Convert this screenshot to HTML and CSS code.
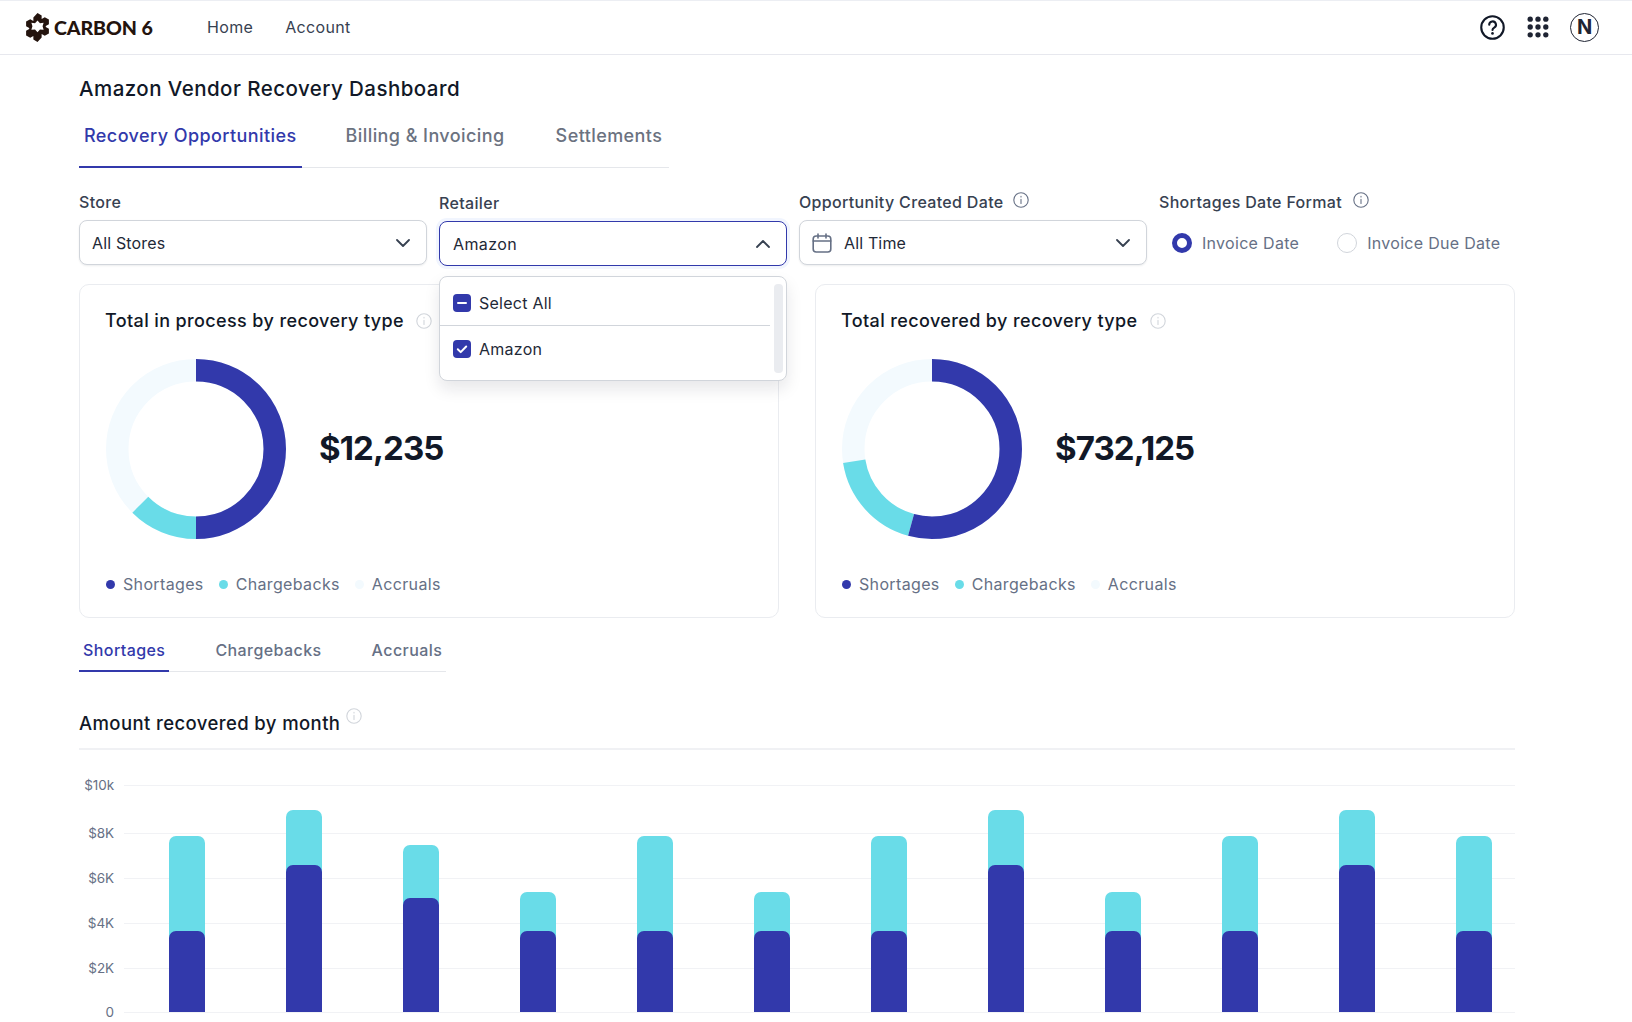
FILE: index.html
```html
<!DOCTYPE html>
<html lang="en">
<head>
<meta charset="utf-8">
<title>Amazon Vendor Recovery Dashboard</title>
<link rel="stylesheet" href="styles.css">
</head>
<body>
<header class="topbar">
  <div class="brand">
    <svg class="brand-mark" viewBox="0 0 28 28" aria-hidden="true">
      <path fill="#24140e" d="M14 0l4 2.3v3.4l3-1.7 4 2.3v4.6l-3 1.7v.8l3 1.7v4.6l-4 2.3-3-1.7v3.4L14 28l-4-2.3v-3.4L7 24l-4-2.3v-4.6l3-1.7v-.8l-3-1.7V8.3L7 6l3 1.7V4.3z"/>
      <path fill="#fff" d="M14 7.2l2.4 2.6 3.5-.3-1 3.4 1 3.3-3.5-.2-2.4 2.6-2.4-2.6-3.5.2 1-3.3-1-3.4 3.5.3z"/>
    </svg>
    <span class="brand-name">CARBON 6</span>
  </div>
  <nav class="mainnav"><a>Home</a><a>Account</a></nav>
  <div class="top-icons">
    <svg class="icon-help" viewBox="0 0 26 26" aria-hidden="true">
      <circle cx="13" cy="13" r="11.7" fill="none" stroke="#111827" stroke-width="2.2"/>
      <path d="M9.6 10.2a3.5 3.5 0 1 1 5.2 3c-1.2.7-1.8 1.3-1.8 2.4" fill="none" stroke="#111827" stroke-width="2.2" stroke-linecap="round"/>
      <circle cx="13" cy="19.2" r="1.4" fill="#111827"/>
    </svg>
    <svg class="icon-apps" viewBox="0 0 24 24" aria-hidden="true">
      <g fill="#1f2433">
        <circle cx="3.5" cy="3.5" r="2.9"/><circle cx="12" cy="3.5" r="2.9"/><circle cx="20.5" cy="3.5" r="2.9"/>
        <circle cx="3.5" cy="12" r="2.9"/><circle cx="12" cy="12" r="2.9"/><circle cx="20.5" cy="12" r="2.9"/>
        <circle cx="3.5" cy="20.5" r="2.9"/><circle cx="12" cy="20.5" r="2.9"/><circle cx="20.5" cy="20.5" r="2.9"/>
      </g>
    </svg>
    <div class="avatar">N</div>
  </div>
</header>

<main class="page">
  <h1 class="page-title">Amazon Vendor Recovery Dashboard</h1>
  <div class="tabs">
    <a class="tab active">Recovery Opportunities</a>
    <a class="tab">Billing &amp; Invoicing</a>
    <a class="tab">Settlements</a>
  </div>

  <section class="filters">
    <div class="field">
      <label class="field-label">Store</label>
      <div class="select">
        <span class="select-value">All Stores</span>
        <svg class="chev" viewBox="0 0 14 8" aria-hidden="true"><path d="M1 1l6 6 6-6"/></svg>
      </div>
    </div>
    <div class="field field-open">
      <label class="field-label">Retailer</label>
      <div class="select select-open">
        <span class="select-value">Amazon</span>
        <svg class="chev" viewBox="0 0 14 8" aria-hidden="true"><path d="M1 7l6-6 6 6"/></svg>
      </div>
      <div class="menu">
        <div class="menu-list">
          <div class="menu-item menu-item-rule">
            <span class="check"><svg viewBox="0 0 18 18" aria-hidden="true"><path d="M5 9h8" stroke="#fff" stroke-width="2" stroke-linecap="round"/></svg></span>
            Select All
          </div>
          <div class="menu-item">
            <span class="check"><svg viewBox="0 0 18 18" aria-hidden="true"><path d="M4.8 9.3l2.9 2.8 5.5-5.6" fill="none" stroke="#fff" stroke-width="2" stroke-linecap="round" stroke-linejoin="round"/></svg></span>
            Amazon
          </div>
        </div>
        <div class="menu-scroll"></div>
      </div>
    </div>
    <div class="field">
      <label class="field-label">Opportunity Created Date
        <svg class="info info-dark" viewBox="0 0 16 16" aria-hidden="true"><circle cx="8" cy="8" r="7.2"/><path d="M8 7.4v4M8 4.4v.6"/></svg>
      </label>
      <div class="select">
        <svg class="calendar" viewBox="0 0 20 20" aria-hidden="true"><rect x="1.2" y="3" width="17.6" height="16" rx="3"/><path d="M1.2 8h17.6M6 1v4M14 1v4"/></svg>
        <span class="select-value">All Time</span>
        <svg class="chev" viewBox="0 0 14 8" aria-hidden="true"><path d="M1 1l6 6 6-6"/></svg>
      </div>
    </div>
    <div class="field">
      <label class="field-label">Shortages Date Format
        <svg class="info info-dark info-far" viewBox="0 0 16 16" aria-hidden="true"><circle cx="8" cy="8" r="7.2"/><path d="M8 7.4v4M8 4.4v.6"/></svg>
      </label>
      <div class="radios">
        <span class="radio-opt"><i class="radio radio-on"></i>Invoice Date</span>
        <span class="radio-opt"><i class="radio"></i>Invoice Due Date</span>
      </div>
    </div>
  </section>

  <section class="cards">
    <article class="card">
      <h2 class="card-title">Total in process by recovery type
        <svg class="info" viewBox="0 0 16 16" aria-hidden="true"><circle cx="8" cy="8" r="7.2"/><path d="M8 7.4v4M8 4.4v.6"/></svg>
      </h2>
      <div class="card-body">
        <svg class="donut" viewBox="0 0 180 180" aria-hidden="true">
          <circle cx="90" cy="90" r="78.75" pathLength="100" stroke="#f3fafe"/>
          <circle cx="90" cy="90" r="78.75" pathLength="100" stroke="#69dce8" stroke-dasharray="12.5 87.5" stroke-dashoffset="-50" transform="rotate(-90 90 90)"/>
          <circle cx="90" cy="90" r="78.75" pathLength="100" stroke="#3239ab" stroke-dasharray="50 50" transform="rotate(-90 90 90)"/>
        </svg>
        <div class="amount">$12,235</div>
      </div>
      <ul class="legend">
        <li><i class="dot dot-blue"></i>Shortages</li>
        <li><i class="dot dot-cyan"></i>Chargebacks</li>
        <li><i class="dot dot-pale"></i>Accruals</li>
      </ul>
    </article>
    <article class="card">
      <h2 class="card-title">Total recovered by recovery type
        <svg class="info" viewBox="0 0 16 16" aria-hidden="true"><circle cx="8" cy="8" r="7.2"/><path d="M8 7.4v4M8 4.4v.6"/></svg>
      </h2>
      <div class="card-body">
        <svg class="donut" viewBox="0 0 180 180" aria-hidden="true">
          <circle cx="90" cy="90" r="78.75" pathLength="100" stroke="#f3fafe"/>
          <circle cx="90" cy="90" r="78.75" pathLength="100" stroke="#69dce8" stroke-dasharray="18.2 81.8" stroke-dashoffset="-54.3" transform="rotate(-90 90 90)"/>
          <circle cx="90" cy="90" r="78.75" pathLength="100" stroke="#3239ab" stroke-dasharray="54.3 45.7" transform="rotate(-90 90 90)"/>
        </svg>
        <div class="amount">$732,125</div>
      </div>
      <ul class="legend">
        <li><i class="dot dot-blue"></i>Shortages</li>
        <li><i class="dot dot-cyan"></i>Chargebacks</li>
        <li><i class="dot dot-pale"></i>Accruals</li>
      </ul>
    </article>
  </section>

  <div class="subtabs">
    <a class="subtab active">Shortages</a>
    <a class="subtab">Chargebacks</a>
    <a class="subtab">Accruals</a>
  </div>

  <h2 class="chart-title">Amount recovered by month
    <svg class="info info-raised" viewBox="0 0 16 16" aria-hidden="true"><circle cx="8" cy="8" r="7.2"/><path d="M8 7.4v4M8 4.4v.6"/></svg>
  </h2>

  <section class="chart">
    <div class="grid-row grid-row-top"><span class="tick">$10k</span><span class="line"></span></div>
    <div class="grid-row"><span class="tick">$8K</span><span class="line"></span></div>
    <div class="grid-row"><span class="tick">$6K</span><span class="line"></span></div>
    <div class="grid-row"><span class="tick">$4K</span><span class="line"></span></div>
    <div class="grid-row grid-row-low"><span class="tick">$2K</span><span class="line"></span></div>
    <div class="grid-row grid-row-base"><span class="tick">0</span><span class="line"></span></div>
    <div class="bars">
      <div class="bar" style="height:176px"><div class="bar-low" style="height:81px"></div></div>
      <div class="bar" style="height:202px"><div class="bar-low" style="height:147px"></div></div>
      <div class="bar" style="height:167px"><div class="bar-low" style="height:114px"></div></div>
      <div class="bar" style="height:120px"><div class="bar-low" style="height:81px"></div></div>
      <div class="bar" style="height:176px"><div class="bar-low" style="height:81px"></div></div>
      <div class="bar" style="height:120px"><div class="bar-low" style="height:81px"></div></div>
      <div class="bar" style="height:176px"><div class="bar-low" style="height:81px"></div></div>
      <div class="bar" style="height:202px"><div class="bar-low" style="height:147px"></div></div>
      <div class="bar" style="height:120px"><div class="bar-low" style="height:81px"></div></div>
      <div class="bar" style="height:176px"><div class="bar-low" style="height:81px"></div></div>
      <div class="bar" style="height:202px"><div class="bar-low" style="height:147px"></div></div>
      <div class="bar" style="height:176px"><div class="bar-low" style="height:81px"></div></div>
    </div>
  </section>
</main>
</body>
</html>
```

FILE: styles.css
```css
* { box-sizing: border-box; }
html, body { margin: 0; padding: 0; background: #fff; }
body {
  height: 1022px;
  overflow: hidden;
  font-family: "Inter", "Noto Sans", sans-serif;
  color: #111827;
}
h1, h2, ul { margin: 0; padding: 0; font-weight: 500; }

/* top bar */
.topbar {
  display: flex;
  align-items: center;
  height: 55px;
  padding: 0 33px 1px 23px;
  border-top: 1px solid #eceef3;
  border-bottom: 1px solid #e7e8ee;
}
.brand { display: flex; align-items: center; gap: 2px; width: 184px; }
.brand-mark { width: 29px; height: 29px; flex: none; }
.brand-name {
  font-family: "Lato", sans-serif;
  font-weight: 900;
  font-size: 19.6px;
  letter-spacing: -0.1px;
  color: #24140e;
}
.mainnav { display: flex; gap: 32px; font-size: 16px; letter-spacing: .33px; color: #374151; }
.top-icons { margin-left: auto; display: flex; align-items: center; gap: 22px; }
.icon-help { width: 25px; height: 25px; display: block; }
.icon-apps { width: 22px; height: 22px; display: block; margin-right: -1px; }
.avatar {
  width: 29px; height: 29px;
  border: 1.5px solid #1f2433;
  border-radius: 50%;
  display: flex; align-items: center; justify-content: center;
  font-weight: 700; font-size: 20px; color: #1f2433;
}

/* page */
.page { padding: 0 117px 0 79px; }
.page-title { font-size: 20.5px; line-height: 28px; padding-top: 20px; letter-spacing: .45px; color: #111827; }

.tabs {
  display: flex;
  width: 590px;
  margin-top: 10px;
  border-bottom: 1px solid #e5e7eb;
}
.tab {
  height: 54px;
  padding: 10px 5px 0;
  margin-right: 41px;
  font-size: 18px;
  line-height: 26px;
  letter-spacing: .42px;
  color: #6b7280;
  font-weight: 500;
  white-space: nowrap;
}
.tab:last-child { margin-right: 0; }
.tab.active { color: #3239ab; border-bottom: 2px solid #3239ab; margin-bottom: -1px; margin-right: 39px; height: 55px; }

/* filters */
.filters {
  display: grid;
  grid-template-columns: repeat(3, 348px) 1fr;
  column-gap: 12px;
  margin-top: 21px;
}
.field { position: relative; min-width: 0; }
.field-label {
  display: flex; align-items: center; gap: 10px;
  height: 25px;
  font-size: 16px;
  font-weight: 500;
  letter-spacing: .33px;
  color: #374151;
  white-space: nowrap;
}
.select {
  display: flex; align-items: center;
  height: 45px;
  margin-top: 6px;
  padding: 0 16px 0 12px;
  background: #fff;
  border: 1px solid #d1d5db;
  border-radius: 8px;
  box-shadow: 0 1px 2px rgba(16, 24, 40, .08);
  font-size: 16px;
  letter-spacing: .15px;
  color: #1f2937;
}
.field-open .field-label { padding-top: 2px; }
.select-open {
  margin-top: 7px;
  padding-left: 13px;
  border: 1.5px solid #3239ab;
  box-shadow: 0 0 0 3px #f1f5fe;
  letter-spacing: .4px;
}
.select-value { flex: 1; }
.chev { width: 14px; height: 8px; fill: none; stroke: #374151; stroke-width: 1.8; stroke-linecap: round; stroke-linejoin: round; flex: none; }
.calendar { width: 20px; height: 20px; margin-right: 12px; fill: none; stroke: #667085; stroke-width: 1.6; stroke-linecap: round; flex: none; }

.menu {
  position: absolute; z-index: 5;
  left: 0; right: 0; top: 87px;
  height: 105px;
  display: flex;
  padding: 7px 3px 7px 0;
  background: #fff;
  border: 1px solid #d1d5db;
  border-radius: 8px;
  box-shadow: 0 8px 16px rgba(16, 24, 40, .1);
}
.menu-list { flex: 1; }
.menu-item {
  display: flex; align-items: center; gap: 8px;
  height: 45px;
  padding-left: 13px;
  font-size: 16px;
  letter-spacing: .25px;
  color: #1f2937;
}
.menu-item-rule { height: 42px; padding-bottom: 4px; border-bottom: 1px solid #d1d5db; }
.check { width: 18px; height: 18px; border-radius: 4px; background: #3239ab; display: block; flex: none; }
.check svg { display: block; width: 18px; height: 18px; }
.menu-scroll { width: 9px; margin-left: 4px; background: #eaecf0; border-radius: 4px; }

.radios { display: flex; gap: 38px; height: 45px; margin-top: 6px; align-items: center; padding-left: 13px; }
.radio-opt { display: flex; align-items: center; gap: 10px; font-size: 16px; letter-spacing: .3px; color: #667085; white-space: nowrap; }
.radio { width: 20px; height: 20px; border-radius: 50%; border: 1px solid #d1d5db; display: block; background: #fff; }
.radio-on { border: 5.5px solid #3239ab; }

.info { width: 16px; height: 16px; fill: none; stroke: #d1d5db; stroke-width: 1.1; stroke-linecap: round; flex: none; }
.info-dark { stroke: #667085; margin-top: -4px; }
.info-far { margin-left: 1px; }
.info-raised { position: relative; top: -7px; margin-left: 1px; }

/* cards */
.cards {
  display: grid;
  grid-template-columns: 700px 700px;
  column-gap: 36px;
  margin-top: 18px;
}
.card {
  height: 334px;
  padding: 22px 25px 0;
  border: 1px solid #eaecf0;
  border-radius: 10px;
}
.card-title {
  display: flex; align-items: center; gap: 12px;
  font-size: 18px; line-height: 28px; font-weight: 500;
  letter-spacing: .38px;
  color: #111827;
}
.card-body { display: flex; align-items: center; gap: 33px; margin-top: 24px; }
.donut { width: 180px; height: 180px; display: block; flex: none; margin-left: 1px; }
.donut circle { fill: none; stroke-width: 22.5; }
.amount { font-size: 33px; font-weight: 700; letter-spacing: -0.9px; color: #111827; margin-top: -3px; }
.legend { list-style: none; display: flex; gap: 15px; margin-top: 33px; padding-left: 1px; font-size: 16px; font-weight: 400; letter-spacing: .35px; color: #667085; line-height: 24px; }
.legend li { display: flex; align-items: center; gap: 8px; }
.dot { width: 9px; height: 9px; border-radius: 50%; display: block; }
.dot-blue { background: #3239ab; }
.dot-cyan { background: #69dce8; }
.dot-pale { background: #f3fafe; }

/* sub tabs */
.subtabs {
  display: flex;
  width: 367px;
  margin-top: 17px;
  border-bottom: 1px solid #e5e7eb;
}
.subtab {
  height: 36px;
  padding: 3px 4px 0;
  margin-right: 42px;
  font-size: 16px;
  line-height: 24px;
  font-weight: 500;
  letter-spacing: .42px;
  color: #667085;
  white-space: nowrap;
}
.subtab:last-child { margin-right: 0; }
.subtab.active { color: #3239ab; border-bottom: 2px solid #3239ab; margin-bottom: -1px; height: 37px; }

/* chart */
.chart-title {
  display: flex; align-items: center; gap: 5px;
  height: 47px;
  margin-top: 31px;
  padding-bottom: 5px;
  font-size: 18.5px;
  line-height: 28px;
  letter-spacing: .4px;
  border-bottom: 2px solid #f0f1f4;
  color: #111827;
}
.chart { position: relative; margin-top: 35px; }
.grid-row { display: flex; align-items: flex-start; height: 45px; }
.grid-row-top { height: 48px; }
.grid-row-low { height: 44px; }
.grid-row-base { height: 10px; }
.tick {
  width: 35px; margin-right: 10px;
  text-align: right;
  font-size: 13.5px; line-height: 16px;
  letter-spacing: -.1px;
  margin-top: -8px;
  color: #667085;
}
.line { flex: 1; height: 1px; background: #f1f2f5; }
.bars {
  position: absolute;
  left: 90px; top: 0;
  height: 227px;
  display: flex;
  align-items: flex-end;
  gap: 81px;
}
.bar {
  width: 36px;
  display: flex; flex-direction: column; justify-content: flex-end;
  background: #69dce8;
  border-radius: 7px 7px 0 0;
}
.bar-low { background: #3239ab; border-radius: 7px 7px 0 0; }
```
